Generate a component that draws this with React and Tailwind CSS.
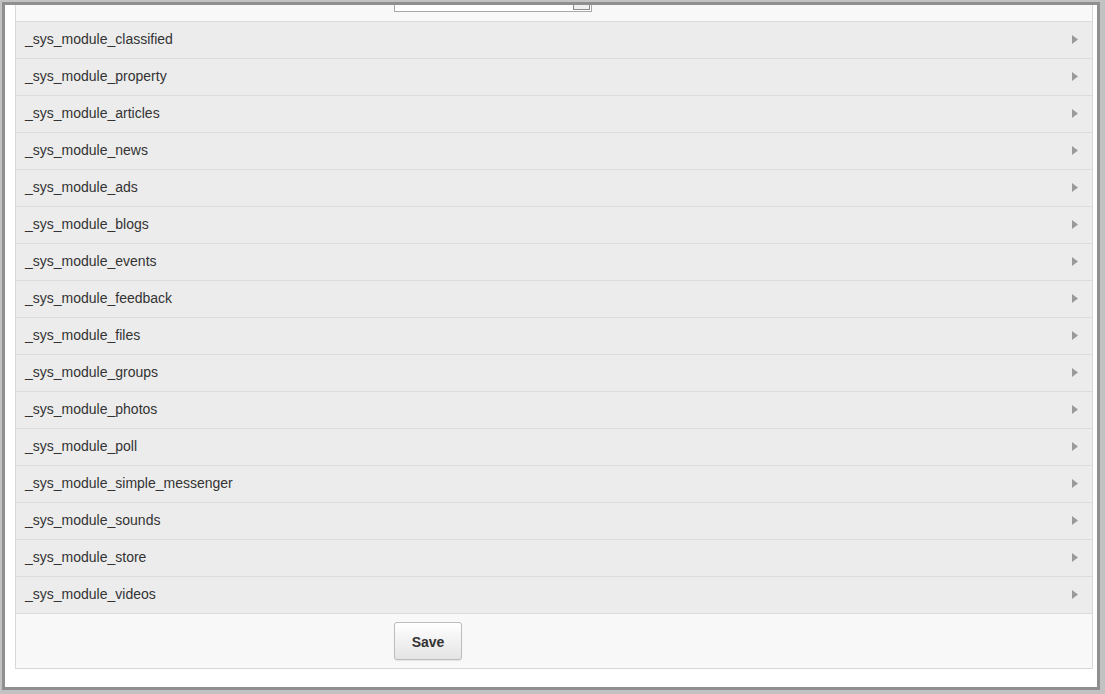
const modules = [
  "classified",
  "property",
  "articles",
  "news",
  "ads",
  "blogs",
  "events",
  "feedback",
  "files",
  "groups",
  "photos",
  "poll",
  "simple_messenger",
  "sounds",
  "store",
  "videos",
]

export default function App() {
  return (
    <div className="w-[1105px] h-[694px] bg-[#c2c2c2] pt-[2px] pl-[2px] pr-[5px] pb-[4px] overflow-hidden" style={{ fontFamily: '"Liberation Sans", Arial, sans-serif' }}>
      <div className="h-full border-[3px] border-[#8f8f8f] bg-white pl-[10px] pr-[4px] pb-[18px] flex flex-col">
        <div className="flex-1 flex flex-col border-x border-b border-[#d8d8d8] overflow-hidden">
          {/* top of the form, scrolled out of view */}
          <div className="h-[16px] bg-[#f8f8f8] pl-[378px]">
            <div className="relative w-[198px] h-[7px] border-x border-b border-[#a8a8a8] bg-white">
              <div className="absolute right-[1px] top-0 w-[17px] h-[5px] border-x border-b border-[#8a8a8a] bg-[#f0f0f0]"></div>
            </div>
          </div>

          {modules.map((m) => (
            <div key={m} className="h-[37px] border-t border-[#dcdcdc] bg-[#ececec] flex items-center justify-between pl-[9px] pr-[14px] pb-[2px] cursor-pointer">
              <span className="text-[14px] text-[#333]">_sys_module_{m}</span>
              <svg width="6" height="9" viewBox="0 0 6 9">
                <path d="M0 0 L6 4.5 L0 9 Z" fill="#9a9a9a" />
              </svg>
            </div>
          ))}

          <div className="flex-1 border-t border-[#dcdcdc] bg-[#f8f8f8] pl-[378px] pt-[8px]">
            <button className="w-[68px] h-[38px] pt-[2px] rounded-[3px] border border-[#bdbdbd] bg-gradient-to-b from-white to-[#e4e4e4] text-[14px] font-bold text-[#333] shadow-[0_1px_1px_rgba(0,0,0,0.08)]">
              Save
            </button>
          </div>
        </div>
      </div>
    </div>
  )
}
